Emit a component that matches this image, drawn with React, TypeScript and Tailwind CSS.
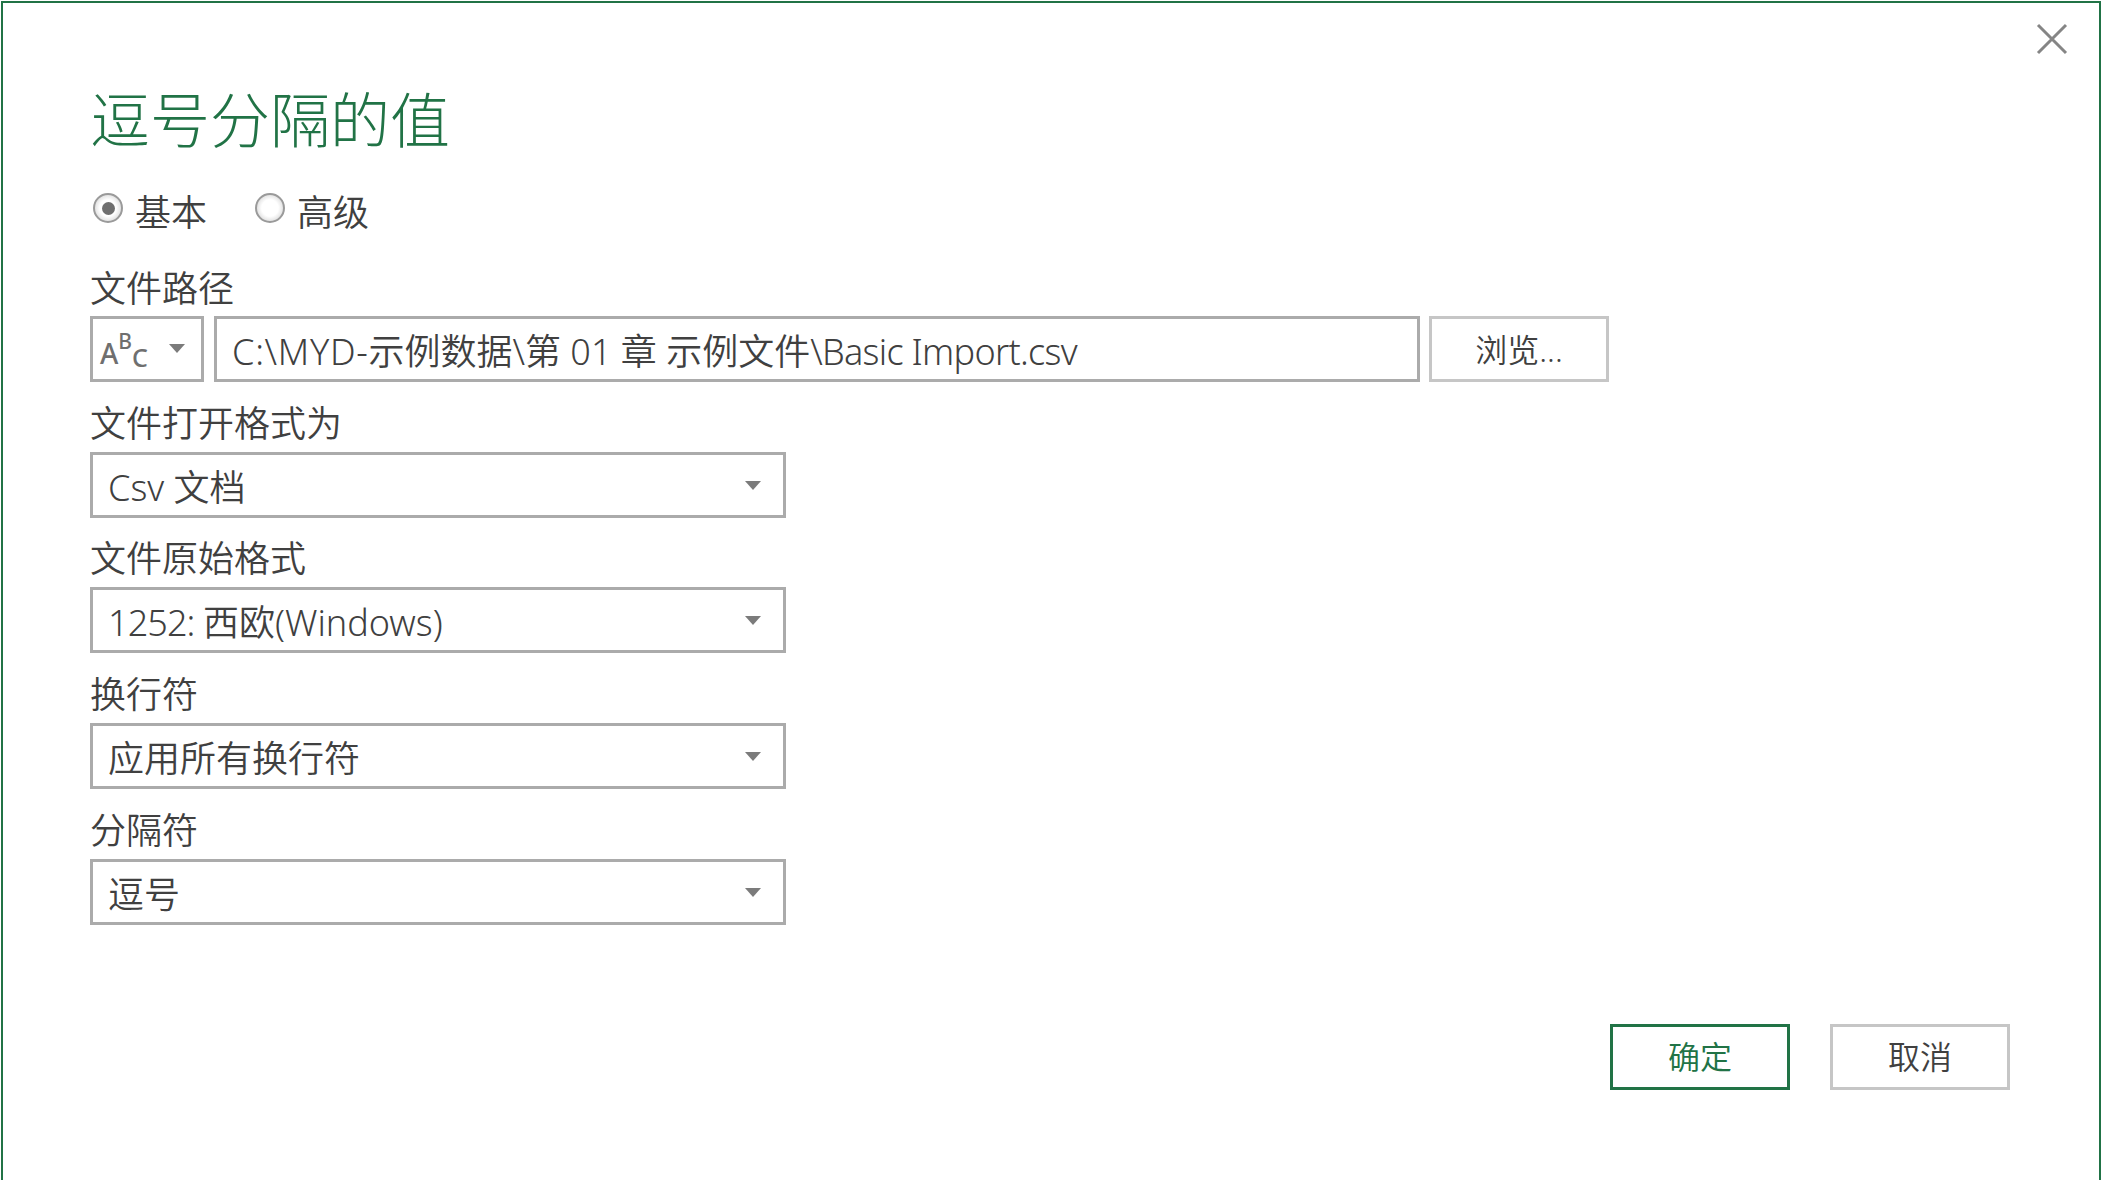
const font = { fontFamily: '"Noto Sans", "Noto Sans CJK SC", sans-serif' };

function Caret({ className }: { className: string }) {
  return (
    <svg className={className} width="16" height="9" viewBox="0 0 16 9">
      <path d="M0 0H16L8 9Z" fill="#7b7b7b" />
    </svg>
  );
}

function Radio({ checked, label }: { checked?: boolean; label: string }) {
  return (
    <div className="flex items-center">
      <div className="w-[30px] h-[30px] rounded-full border-2 border-[#9a9a9a] bg-[radial-gradient(circle,#ffffff_45%,#c4c4c4_100%)] flex items-center justify-center mt-[-10px]">
        {checked && <div className="w-[13px] h-[13px] rounded-full bg-[#6f6f6f]" />}
      </div>
      <span className="ml-[12px] text-[36px] leading-[48px] text-[#404040] font-[350]">{label}</span>
    </div>
  );
}

function Field({ label, children, extra }: { label: string; children: React.ReactNode; extra?: string }) {
  return (
    <div className={`flex flex-col ${extra ?? ""}`}>
      <div className="text-[36px] leading-[48px] h-[48px] text-[#404040] font-[350] mb-[4px]">{label}</div>
      <div className="w-[696px] h-[66px] border-[3px] border-[#ababab] flex items-center justify-between pl-[15px] pr-[22px]">
        <span className="text-[36px] leading-[48px] text-[#404040] font-[350] whitespace-nowrap pt-[5px]">{children}</span>
        <Caret className="" />
      </div>
    </div>
  );
}

export default function App() {
  return (
    <div style={font} className="w-[2102px] h-[1180px] bg-[#ffffff] pt-px pl-px pr-px">
      <div className="w-full h-full bg-white border-t-2 border-l-2 border-r-2 border-[#217346] relative overflow-hidden flex flex-col pl-[87px]">
        <button className="absolute top-[18px] right-[29px] w-[36px] h-[36px] flex items-center justify-center">
          <svg width="36" height="36" viewBox="0 0 36 36">
            <path d="M4 4L32 32M32 4L4 32" stroke="#858585" strokeWidth="3" fill="none" />
          </svg>
        </button>
        <h1 className="mt-[77px] text-[60px] leading-[80px] h-[80px] text-[#217346] font-light">逗号分隔的值</h1>
        <div className="flex mt-[29px] gap-[48px] pl-[3px]">
          <Radio checked label="基本" />
          <Radio label="高级" />
        </div>
        <div className="mt-[28px] text-[36px] leading-[48px] h-[48px] text-[#404040] font-[350] mb-[3px]">文件路径</div>
        <div className="flex">
          <div className="w-[114px] h-[66px] border-[3px] border-[#ababab] flex items-center pl-[7px] mr-[10px] relative">
            <div className="flex items-center text-[#6f6f6f] font-medium h-[50px] leading-none">
              <span className="text-[28px] mt-[8px]">A</span>
              <span className="text-[21px] mt-[-16px]">B</span>
              <span className="text-[25px] mt-[16px]">C</span>
            </div>
            <Caret className="absolute left-[76px] top-[25px]" />
          </div>
          <div className="w-[1206px] h-[66px] border-[3px] border-[#ababab] flex items-center pl-[15px] mr-[9px]">
            <span className="text-[36px] leading-[48px] text-[#404040] font-[350] whitespace-nowrap pt-[5px]">
              <span className="tracking-[0.7px]">C:\MYD-</span>示例数据\第 01 章 示例文件<span className="tracking-[-0.7px]">\Basic Import.csv</span>
            </span>
          </div>
          <div className="w-[180px] h-[66px] border-[3px] border-[#c6c6c6] flex items-center justify-center text-[32px] text-[#404040] font-[350] pt-[2px]">浏览...</div>
        </div>
        <div className="mt-[18px] flex flex-col gap-[17px]">
          <Field label="文件打开格式为">Csv 文档</Field>
          <Field label="文件原始格式"><span className="tracking-[-0.9px]">1252: </span>西欧(Windows)</Field>
          <Field label="换行符" extra="mt-[1px]">应用所有换行符</Field>
          <Field label="分隔符" extra="mt-[1px]">逗号</Field>
        </div>
        <div className="flex mt-[99px] gap-[40px] pl-[1520px]">
          <div className="w-[180px] h-[66px] border-[3px] border-[#217346] flex items-center justify-center text-[32px] text-[#217346] font-[350]">确定</div>
          <div className="w-[180px] h-[66px] border-[3px] border-[#c6c6c6] flex items-center justify-center text-[32px] text-[#404040] font-[350]">取消</div>
        </div>
      </div>
    </div>
  );
}
